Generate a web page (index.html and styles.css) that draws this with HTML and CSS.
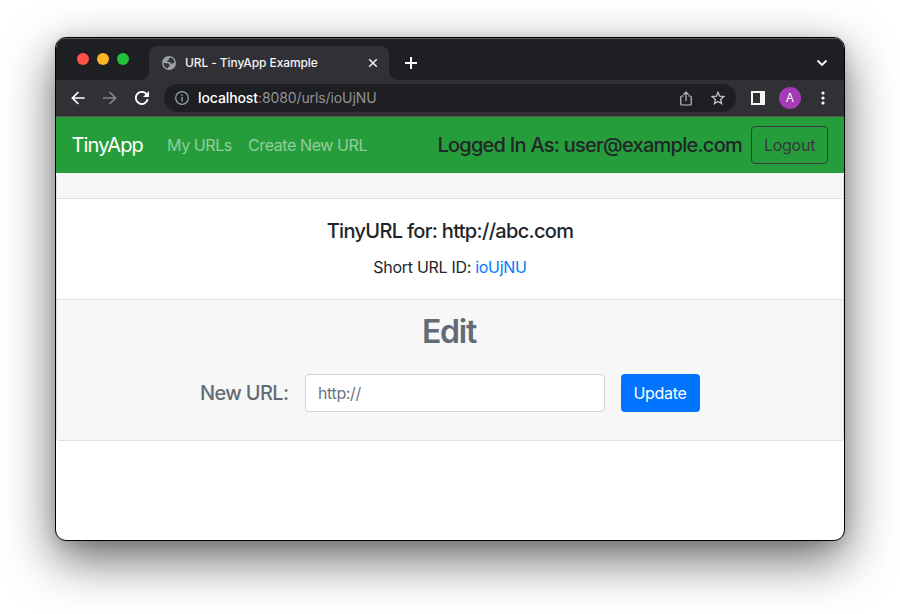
FILE: index.html
```
<!DOCTYPE html>
<html lang="en">
<head>
<meta charset="utf-8">
<title>URL - TinyApp Example</title>
<link rel="stylesheet" href="styles.css">
</head>
<body>
<div class="window">
  <div class="tabstrip">
    <div class="lights"><i class="red"></i><i class="yellow"></i><i class="green"></i></div>
    <div class="tab">
      <svg class="globe" width="14" height="14" viewBox="0 0 14 14"><circle cx="7" cy="7" r="7" fill="#9aa0a6"/><path d="M8.500 1.500 6.800 2.700v1.200l-1.500.9v1.200h2.600l.9 1.600h2.200l1.500-1C12.300 4 10.800 2.200 8.500 1.500zM1.400 6.800C1.300 9.700 3.200 12.100 5.900 12.600l.1-1.500 1.600-.7V8.900L6.200 7.300H3.400z" fill="#34343a"/></svg>
      <span class="tab-title">URL - TinyApp Example</span>
      <svg class="close" width="10" height="10" viewBox="0 0 10 10"><path d="M1.2 1.2l7.6 7.6M8.800 1.200l-7.600 7.600" stroke="#e8eaed" stroke-width="1.6"/></svg>
    </div>
    <svg class="plus" width="12" height="12" viewBox="0 0 12 12"><path d="M6 0v12M0 6h12" stroke="#fff" stroke-width="2"/></svg>
    <svg class="chevron" width="12" height="8" viewBox="0 0 12 8"><path d="M1.500 1.500 6 6l4.500-4.500" fill="none" stroke="#fff" stroke-width="1.800"/></svg>
  </div>
  <div class="toolbar">
    <svg class="back" width="14" height="14" viewBox="0 0 14 14"><path d="M13.700 7H1.500M7.400 1 1.400 7l6 6" fill="none" stroke="#fff" stroke-width="1.700"/></svg>
    <svg class="forward" width="14" height="14" viewBox="0 0 14 14"><path d="M0 7h12.500M6.600 1l6 6-6 6" fill="none" stroke="#86868a" stroke-width="1.700"/></svg>
    <svg class="reload" width="14" height="14" viewBox="0 0 14 14"><path d="M12.700 8.300A6 6 0 1 1 11.500 3.100L13 4.700" fill="none" stroke="#fff" stroke-width="1.900"/><path d="M14 0v6H8z" fill="#fff"/></svg>
    <div class="omnibox">
      <svg width="14" height="14" viewBox="0 0 14 14"><circle cx="7" cy="7" r="6.300" fill="none" stroke="#9aa0a6" stroke-width="1.300"/><path d="M7 6v4.500M7 3.500V5" stroke="#9aa0a6" stroke-width="1.400"/></svg>
      <span class="address"><b>localhost</b>:8080/urls/ioUjNU</span>
      <svg class="share" width="12" height="15" viewBox="0 0 12 15"><path d="M3.500 5H1.700Q.8 5 .8 5.900v7.200q0 .9.900.9h8.600q.9 0 .9-.9V5.900q0-.9-.9-.9H8.500M6 10V1.400M3.300 3.800 6 1.100l2.700 2.700" fill="none" stroke="#c0c2c5" stroke-width="1.200"/></svg>
      <svg class="star" width="14" height="14" viewBox="0 0 14 14"><path d="M7 1.300 8.600 5.200l4.300.4-3.300 2.800 1 4.200L7 10.400l-3.600 2.200 1-4.200L1.100 5.600l4.300-.4z" fill="none" stroke="#c0c2c5" stroke-width="1.300"/></svg>
    </div>
    <svg class="panel" width="14" height="14" viewBox="0 0 14 14"><path fill="#f4f4f5" fill-rule="evenodd" d="M0 0h14v14H0zM2 2v10h7V2z"/></svg>
    <span class="avatar">A</span>
    <svg class="dots" width="4" height="14" viewBox="0 0 4 14" fill="#fff"><circle cx="2" cy="2" r="1.600"/><circle cx="2" cy="7" r="1.600"/><circle cx="2" cy="12" r="1.600"/></svg>
  </div>
  <nav class="navbar">
    <a class="brand">TinyApp</a>
    <a class="link my-urls">My URLs</a>
    <a class="link create">Create New URL</a>
    <span class="user">Logged In As: user@example.com</span>
    <button class="logout"><span>Logout</span></button>
  </nav>
  <main class="card">
    <div class="card-header"></div>
    <div class="card-body">
      <h5><span>TinyURL for: http://abc.com</span></h5>
      <p><span>Short URL ID: <a>ioUjNU</a></span></p>
    </div>
    <div class="card-footer">
      <h2><span>Edit</span></h2>
      <form>
        <label>New URL:</label>
        <input type="text" placeholder="http://">
        <button type="button" class="update"><span>Update</span></button>
      </form>
    </div>
  </main>
</div>
</body>
</html>
```
FILE: styles.css
```
* { box-sizing: border-box; }
html, body { margin: 0; height: 100%; overflow: hidden; background: #fff; }
body { font: 16px/24px Inter, sans-serif; color: #212529; padding: 37px 55px; }
svg { display: block; flex: none; }
.window {
  width: 790px; height: 504px; border: 1px solid #000; border-radius: 11px;
  overflow: hidden; background: #fff;
  box-shadow: 0 18px 50px rgba(0,0,0,.6), 0 3px 14px rgba(0,0,0,.12);
}
.tabstrip { height: 42px; background: #1e1f22; display: flex; align-items: center; padding-left: 21px; padding-top: 7px; border-top: 1px solid #5b5c5f; }
.lights { display: flex; gap: 8px; width: 72px; padding-bottom: 8px; }
.lights i { width: 12px; height: 12px; border-radius: 50%; }
.red { background: #ff5149; }
.yellow { background: #ffb429; }
.green { background: #25c138; }
.tab { position: relative; width: 240px; height: 34px; background: #303035; border-radius: 8px 8px 0 0; display: flex; align-items: center; padding: 0 11px 0 13px; }
.tab::before, .tab::after { content: ""; position: absolute; bottom: 0; width: 8px; height: 8px; }
.tab::before { left: -8px; background: radial-gradient(circle at 0 0, transparent 7.500px, #303035 8px); }
.tab::after { right: -8px; background: radial-gradient(circle at 100% 0, transparent 7.500px, #303035 8px); }
.tab-title { margin-left: 9px; font-size: 12px; font-weight: 500; color: #f4f4f5; letter-spacing: -.1px; white-space: nowrap; }
.close { margin-left: auto; }
.plus { margin-left: 16px; }
.chevron { margin-left: auto; margin-right: 16px; }
.toolbar { height: 37px; background: #303035; border-bottom: 1px solid #57575b; display: flex; align-items: center; padding: 0 19.5px 0 15px; }
.forward { margin-left: 18px; }
.reload { margin-left: 18px; }
.omnibox { margin-left: 15px; width: 572px; height: 28px; border-radius: 14px; background: #1e1f22; display: flex; align-items: center; padding: 0 11px; }
.address { margin-left: 9px; font-size: 14px; color: #929397; letter-spacing: -.1px; }
.address b { color: #fff; font-weight: 500; }
.share { margin-left: auto; }
.star { margin-left: 19px; }
.panel { margin-left: 15px; }
.avatar { margin-left: 14px; width: 22px; height: 22px; border-radius: 50%; background: #a23bb5; color: #fff; font-size: 12px; line-height: 22px; text-align: center; }
.dots { margin-left: auto; }
.navbar { height: 56px; background: #259d3b; display: flex; align-items: center; padding: 0 16px 0 15.5px; white-space: nowrap; }
.brand { font-size: 20px; color: #fff; letter-spacing: -.85px; width: 95.5px; }
.link { color: rgba(255,255,255,.5); letter-spacing: -.4px; }
.my-urls { width: 81px; }
.user { margin-left: auto; font-size: 20px; font-weight: 500; letter-spacing: -.74px; margin-right: 9px; }
button { font: inherit; padding: 0; border-radius: 4px; height: 38px; }
.logout { width: 77px; border: 1px solid #343a40; background: transparent; color: #343a40; letter-spacing: -.25px; }
.card { height: 268px; border: 1px solid #dfdfdf; border-top-color: #efefef; border-radius: 4px; background: #fff; text-align: center; overflow: hidden; }
.card-header { height: 25px; background: #f7f7f7; border-bottom: 1px solid #dfdfdf; }
.card-body { height: 100px; padding-top: 20px; }
h5 { margin: 0 0 12px; font-size: 20px; line-height: 24px; font-weight: 500; letter-spacing: -.68px; }
p { margin: 0; letter-spacing: -.3px; }
p a { color: #007bff; }
.card-footer { height: 141px; background: #f7f7f7; border-top: 1px solid #dfdfdf; padding-top: 13px; color: #636c74; }
h2 { margin: 0; font-size: 32px; line-height: 38px; font-weight: 600; letter-spacing: -1.2px; padding-right: 2px; }
form { display: flex; align-items: center; margin: 23px 0 0 143px; }
label { width: 105px; text-align: left; font-size: 20px; font-weight: 500; letter-spacing: -.65px; white-space: nowrap; }
input { width: 300px; height: 38px; padding: 0 12px; border: 1px solid #ced4da; border-radius: 4px; background: #fff; font: inherit; letter-spacing: -.37px; }
input::placeholder { color: #6c757d; opacity: 1; }
.update { margin-left: 16px; width: 79px; border: 0; background: #0073ff; color: #fff; letter-spacing: -.3px; padding-right: 1px; }
```
